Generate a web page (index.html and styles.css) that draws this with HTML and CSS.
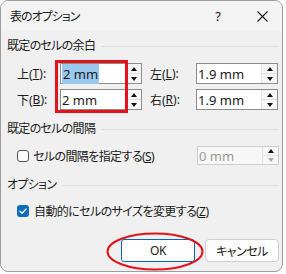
FILE: index.html
```html
<!DOCTYPE html>
<html lang="ja">
<head>
  <meta charset="UTF-8">
  <title>表のオプション</title>
  <link rel="stylesheet" href="styles.css">
</head>
<body>
  <div class="window">
    <div class="titlebar">
      <span class="title">表のオプション</span>
      <span class="tb-help">?</span>
      <span class="tb-close">
        <svg width="11" height="11" viewBox="0 0 11 11"><path d="M0.5 0.5L10.5 10.5M10.5 0.5L0.5 10.5" stroke="#1a1a1a" stroke-width="1.1" fill="none"/></svg>
      </span>
    </div>

    <div class="content">
      <div class="group-head"><span>既定のセルの余白</span><i></i></div>
      <div class="margins">
        <label>上(<u>T</u>):</label>
        <div class="spin"><div class="val"><span class="sel">2 mm</span></div><div class="arrows"><b class="up"></b><b class="down"></b></div></div>
        <span></span>
        <label>左(<u>L</u>):</label>
        <div class="spin"><div class="val">1.9 mm</div><div class="arrows"><b class="up"></b><b class="down"></b></div></div>

        <label>下(<u>B</u>):</label>
        <div class="spin"><div class="val">2 mm</div><div class="arrows"><b class="up"></b><b class="down"></b></div></div>
        <span></span>
        <label>右(<u>R</u>):</label>
        <div class="spin"><div class="val">1.9 mm</div><div class="arrows"><b class="up"></b><b class="down"></b></div></div>
      </div>

      <div class="group-head gap-2"><span>既定のセルの間隔</span><i></i></div>
      <div class="spacing-row">
        <span class="check"></span>
        <span class="check-text">セルの間隔を指定する(<u>S</u>)</span>
        <div class="spin disabled"><div class="val">0 mm</div><div class="arrows"><b class="up"></b><b class="down"></b></div></div>
      </div>

      <div class="group-head gap-3"><span>オプション</span><i></i></div>
      <div class="option-row">
        <span class="check checked">
          <svg width="12" height="12" viewBox="0 0 12 12"><path d="M3 6.2L5.1 8.2L9.2 3.9" stroke="#fff" stroke-width="1.3" fill="none" stroke-linecap="round" stroke-linejoin="round"/></svg>
        </span>
        <span class="check-text">自動的にセルのサイズを変更する(<u>Z</u>)</span>
      </div>

      <div class="buttons">
        <button class="btn primary">OK</button>
        <button class="btn">キャンセル</button>
      </div>
    </div>

    <!-- annotations -->
    <div class="mark-box"></div>
    <svg class="mark-ring" width="98" height="39" viewBox="0 0 98 39"><ellipse cx="49" cy="19.5" rx="47.5" ry="18" stroke="#e3121b" stroke-width="2" fill="none"/></svg>
  </div>
</body>
</html>
```

FILE: styles.css
```css
* {
  margin: 0;
  padding: 0;
  box-sizing: border-box;
}
body {
  background: #fff;
  font-family: "Noto Sans", "Noto Sans CJK JP", sans-serif;
  font-size: 12px;
  color: #1a1a1a;
  font-feature-settings: "palt";
}

/* Window */
.window {
  position: relative;
  width: 283px;
  height: 272px;
  border: 1px solid #9c9c9c;
  border-radius: 8px;
  background: #f0f0f0;
  overflow: hidden;
}
.titlebar {
  display: flex;
  align-items: center;
  height: 30px;
  padding-left: 9px;
  background: #f3f3f3;
}
.title {
  flex: 1;
  font-size: 12px;
  letter-spacing: -1px;
}
.tb-help {
  width: 20px;
  text-align: center;
  font-size: 13px;
  margin-right: 14px;
}
.tb-close {
  width: 40px;
  display: flex;
  justify-content: center;
}

/* Content */
.content {
  padding: 7px 3px 0 6px;
}
.group-head {
  display: flex;
  align-items: center;
  height: 16px;
  line-height: 16px;
  letter-spacing: -0.7px;
}
.group-head i {
  flex: 1;
  border-top: 1px solid #dcdcdc;
  margin-left: 6px;
}
.gap-2 { margin-top: 11px; }
.gap-3 { margin-top: 12px; }

.margins {
  display: grid;
  grid-template-columns: 43px 82px 8px 46px 82px;
  row-gap: 5px;
  margin-top: 9px;
  padding-left: 10px;
}
.margins label {
  display: flex;
  align-items: center;
}

/* Spin box */
.spin {
  display: flex;
  height: 21px;
  border: 1px solid #8c8c8c;
  background: #fff;
}
.spin .val {
  flex: 1;
  display: flex;
  align-items: center;
  padding-left: 1px;
  font-size: 13px;
}
.sel {
  background: #99c9ef;
  padding: 1px 1px;
}
.arrows {
  width: 16px;
  display: flex;
  flex-direction: column;
  border-left: 1px solid #e2e2e2;
  background: #f7f7f7;
}
.arrows b {
  flex: 1;
  display: flex;
  align-items: center;
  justify-content: center;
}
.arrows b + b {
  border-top: 1px solid #e2e2e2;
}
.arrows .up::before {
  content: "";
  border-left: 3px solid transparent;
  border-right: 3px solid transparent;
  border-bottom: 4px solid #111;
}
.arrows .down::before {
  content: "";
  border-left: 3px solid transparent;
  border-right: 3px solid transparent;
  border-top: 4px solid #111;
}
.spin.disabled {
  height: 19px;
  border-color: #cdcdcd;
  background: #f7f7f7;
  color: #9a9a9a;
}
.spin.disabled .down::before {
  border-top-color: #a8a8a8;
}

/* Checkbox rows */
.spacing-row {
  display: flex;
  align-items: center;
  margin-top: 9px;
  padding-left: 10px;
}
.spacing-row .spin {
  width: 82px;
  margin-left: auto;
}
.check {
  width: 12px;
  height: 12px;
  border: 1px solid #555;
  border-radius: 3px;
  background: #f9f9f9;
  margin-right: 4px;
}
.check-text {
  letter-spacing: -0.6px;
}
.check.checked {
  border: none;
  background: #0f6cbd;
}
.check.checked svg {
  display: block;
}
.option-row {
  display: flex;
  align-items: center;
  height: 16px;
  margin-top: 10px;
  padding-left: 10px;
}
.option-row .check-text {
  margin-left: 1px;
}

/* Buttons */
.buttons {
  display: flex;
  justify-content: flex-end;
  gap: 10px;
  margin-top: 20px;
}
.btn {
  width: 74px;
  height: 23px;
  border: 1px solid #cfcfcf;
  border-radius: 4px;
  background: #fdfdfd;
  font: inherit;
  font-size: 12px;
  color: #1a1a1a;
  letter-spacing: -0.5px;
}
.btn.primary {
  border: 1px solid #0067c0;
  border-radius: 3px;
  background: #fff;
}

/* Annotations drawn over the dialog */
.mark-box {
  position: absolute;
  left: 54px;
  top: 59px;
  width: 73px;
  height: 53px;
  border: 3px solid #e3121b;
}
.mark-ring {
  position: absolute;
  left: 105px;
  top: 231px;
}
```
